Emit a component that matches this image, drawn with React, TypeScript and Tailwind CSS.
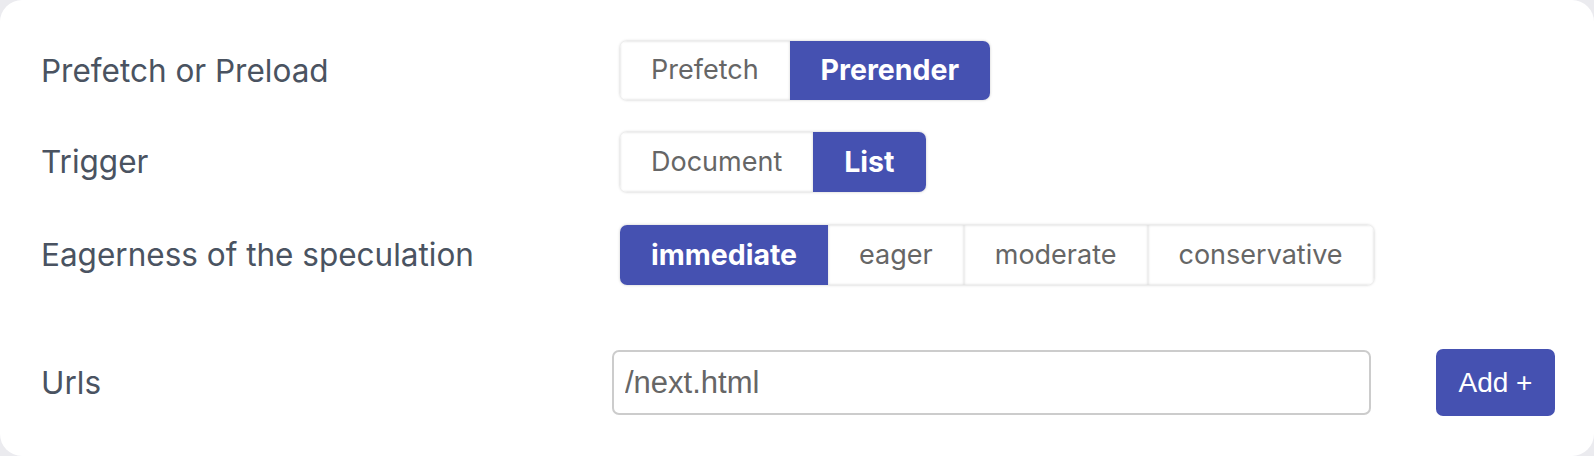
import { useState } from 'react'

type SegProps = {
  options: string[]
  value: string
  onChange: (v: string) => void
}

function Segmented({ options, value, onChange }: SegProps) {
  return (
    <div className="flex h-full rounded-[7px] overflow-hidden shadow-[0_0_3px_rgba(0,0,0,0.22)]">
      {options.map((opt) => {
        const active = opt === value
        return (
          <button
            key={opt}
            onClick={() => onChange(opt)}
            className={
              active
                ? 'h-full px-[31px] bg-[#4551b1] text-white font-bold text-[28.5px]'
                : 'h-full px-[31px] bg-white text-[#666] text-[27px] shadow-[inset_0_0_3px_rgba(0,0,0,0.18)]'
            }
          >
            {opt}
          </button>
        )
      })}
    </div>
  )
}

export default function App() {
  const [mode, setMode] = useState('Prerender')
  const [trigger, setTrigger] = useState('List')
  const [eager, setEager] = useState('immediate')
  const [url, setUrl] = useState('/next.html')

  return (
    <div className="w-[1594px] h-[456px] bg-[#ebebef]">
      <div
        className="w-full h-full bg-white rounded-[22px] pl-[41px] pt-[41px] flex flex-col text-[#4a5361]"
        style={{ fontFamily: 'Inter, "Noto Sans", sans-serif' }}
      >
        {/* Prefetch or Preload */}
        <div className="flex items-center h-[59px]">
          <div className="w-[579px] text-[31.5px]">Prefetch or Preload</div>
          <Segmented options={['Prefetch', 'Prerender']} value={mode} onChange={setMode} />
        </div>

        {/* Trigger */}
        <div className="flex items-center h-[60px] mt-[32px]">
          <div className="w-[579px] text-[31.5px]">Trigger</div>
          <Segmented options={['Document', 'List']} value={trigger} onChange={setTrigger} />
        </div>

        {/* Eagerness */}
        <div className="flex items-center h-[60px] mt-[33px]">
          <div className="w-[579px] text-[31.5px]">Eagerness of the speculation</div>
          <Segmented
            options={['immediate', 'eager', 'moderate', 'conservative']}
            value={eager}
            onChange={setEager}
          />
        </div>

        {/* Urls */}
        <div className="flex items-center h-[67px] mt-[64px]">
          <div className="w-[571px] text-[31.5px]">Urls</div>
          <input
            value={url}
            onChange={(e) => setUrl(e.target.value)}
            className="w-[759px] h-[65px] border-2 border-[#cccccc] rounded-[7px] px-[11px] text-[31px] text-[#666] outline-none"
            style={{ fontFamily: '"Liberation Sans", Arial, sans-serif' }}
          />
          <button
            className="ml-[65px] w-[119px] h-[67px] rounded-[7px] bg-[#4551b1] text-white text-[28px]"
            style={{ fontFamily: '"Liberation Sans", Arial, sans-serif' }}
          >
            Add +
          </button>
        </div>
      </div>
    </div>
  )
}
